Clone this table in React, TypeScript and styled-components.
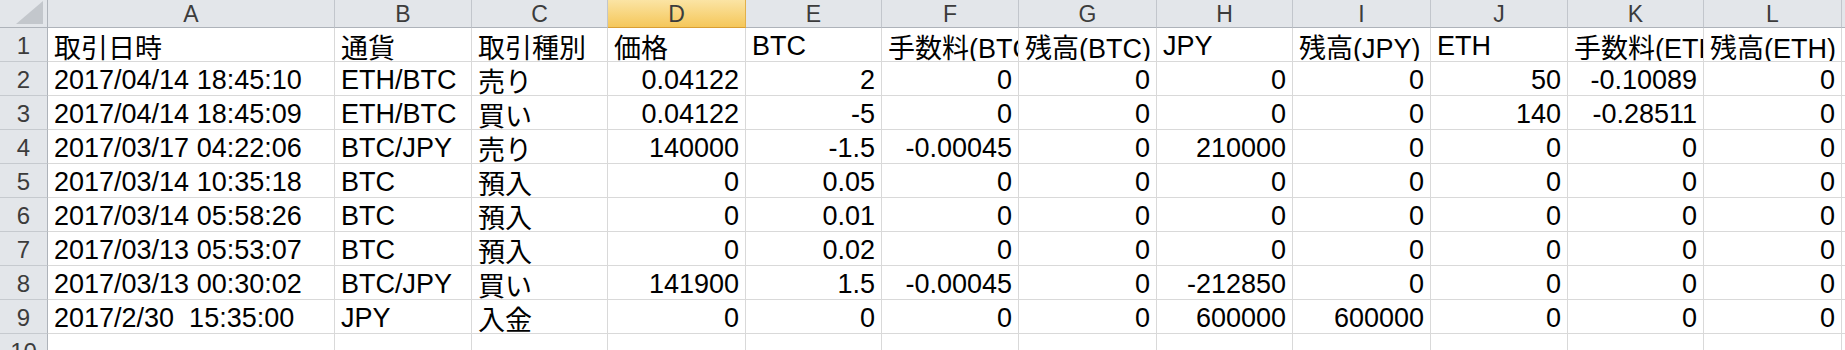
import React from "react";
import styled, { createGlobalStyle } from "styled-components";

const Global = createGlobalStyle`
  html, body { margin: 0; padding: 0; background: #ffffff; overflow: hidden; }
  #root { width: 1845px; height: 350px; overflow: hidden; }
`;

const COL_WIDTHS = [287, 137, 136, 138, 136, 137, 138, 136, 138, 137, 136, 138];
const COL_LETTERS = ["A", "B", "C", "D", "E", "F", "G", "H", "I", "J", "K", "L"];

const Sheet = styled.div`
  display: grid;
  grid-template-columns: 48px ${COL_WIDTHS.map((w) => `${w}px`).join(" ")} 1fr;
  grid-template-rows: 28px repeat(10, 34px);
  width: 1845px;
  font-family: "Liberation Sans", "Noto Sans CJK JP", sans-serif;
`;

const Corner = styled.div`
  position: relative;
  box-sizing: border-box;
  background: #e3e6ea;
  border-right: 1px solid #aeb3ba;
  border-bottom: 1px solid #aeb3ba;
  overflow: hidden;
`;

const CornerTriangle = styled.svg`
  position: absolute;
  right: 4px;
  bottom: 3px;
`;

const ColHeader = styled.div<{ $selected?: boolean }>`
  box-sizing: border-box;
  display: flex;
  align-items: center;
  justify-content: center;
  background: ${(p) =>
    p.$selected ? "linear-gradient(#fbe4a4, #f5c75a)" : "#e3e6ea"};
  border-right: 1px solid ${(p) => (p.$selected ? "#e2b04a" : "#c2c6cc")};
  border-bottom: 1px solid ${(p) => (p.$selected ? "#d99e33" : "#aeb3ba")};
  color: #3c3c3c;
  font-size: 23px;
  line-height: 1;
  padding-top: 1px;
`;

const RowHeader = styled.div`
  box-sizing: border-box;
  display: flex;
  align-items: center;
  justify-content: center;
  background: #e3e6ea;
  border-right: 1px solid #aeb3ba;
  border-bottom: 1px solid #c6cacf;
  color: #3c3c3c;
  font-size: 24px;
  padding-top: 2px;
`;

const Cell = styled.div<{ $align?: "left" | "right" }>`
  box-sizing: border-box;
  display: flex;
  align-items: center;
  justify-content: ${(p) => (p.$align === "right" ? "flex-end" : "flex-start")};
  padding: 3px 6px 0 6px;
  border-right: 1px solid #d9d9d9;
  border-bottom: 1px solid #d9d9d9;
  background: #ffffff;
  color: #000000;
  font-size: 27px;
  white-space: pre;
  overflow: hidden;
  min-width: 0;
`;

const Edge = styled.div<{ $header?: boolean }>`
  background: ${(p) => (p.$header ? "#e3e6ea" : "#ffffff")};
  border-bottom: 1px solid ${(p) => (p.$header ? "#aeb3ba" : "#d9d9d9")};
  box-sizing: border-box;
`;

type Row = (string | number)[];

const HEADER: string[] = [
  "取引日時",
  "通貨",
  "取引種別",
  "価格",
  "BTC",
  "手数料(BTC)",
  "残高(BTC)",
  "JPY",
  "残高(JPY)",
  "ETH",
  "手数料(ETH)",
  "残高(ETH)",
];

const DATA: Row[] = [
  ["2017/04/14 18:45:10", "ETH/BTC", "売り", "0.04122", "2", "0", "0", "0", "0", "50", "-0.10089", "0"],
  ["2017/04/14 18:45:09", "ETH/BTC", "買い", "0.04122", "-5", "0", "0", "0", "0", "140", "-0.28511", "0"],
  ["2017/03/17 04:22:06", "BTC/JPY", "売り", "140000", "-1.5", "-0.00045", "0", "210000", "0", "0", "0", "0"],
  ["2017/03/14 10:35:18", "BTC", "預入", "0", "0.05", "0", "0", "0", "0", "0", "0", "0"],
  ["2017/03/14 05:58:26", "BTC", "預入", "0", "0.01", "0", "0", "0", "0", "0", "0", "0"],
  ["2017/03/13 05:53:07", "BTC", "預入", "0", "0.02", "0", "0", "0", "0", "0", "0", "0"],
  ["2017/03/13 00:30:02", "BTC/JPY", "買い", "141900", "1.5", "-0.00045", "0", "-212850", "0", "0", "0", "0"],
  ["2017/2/30  15:35:00", "JPY", "入金", "0", "0", "0", "0", "600000", "600000", "0", "0", "0"],
];

export default function App() {
  return (
    <>
      <Global />
      <Sheet>
        <Corner>
          <CornerTriangle width="27" height="23" viewBox="0 0 27 23">
            <polygon points="27,0 27,23 0,23" fill="#c3c7cc" />
          </CornerTriangle>
        </Corner>
        {COL_LETTERS.map((l) => (
          <ColHeader key={l} $selected={l === "D"}>
            {l}
          </ColHeader>
        ))}
        <Edge $header />

        <RowHeader>1</RowHeader>
        {HEADER.map((h, i) => (
          <Cell key={`h${i}`} $align="left">
            {h}
          </Cell>
        ))}
        <Edge />

        {DATA.map((row, r) => (
          <React.Fragment key={`r${r}`}>
            <RowHeader>{r + 2}</RowHeader>
            {row.map((v, c) => (
              <Cell key={`c${r}-${c}`} $align={c < 3 ? "left" : "right"}>
                {v}
              </Cell>
            ))}
            <Edge />
          </React.Fragment>
        ))}

        <RowHeader>10</RowHeader>
        {COL_LETTERS.map((l) => (
          <Cell key={`e${l}`} />
        ))}
        <Edge />
      </Sheet>
    </>
  );
}
